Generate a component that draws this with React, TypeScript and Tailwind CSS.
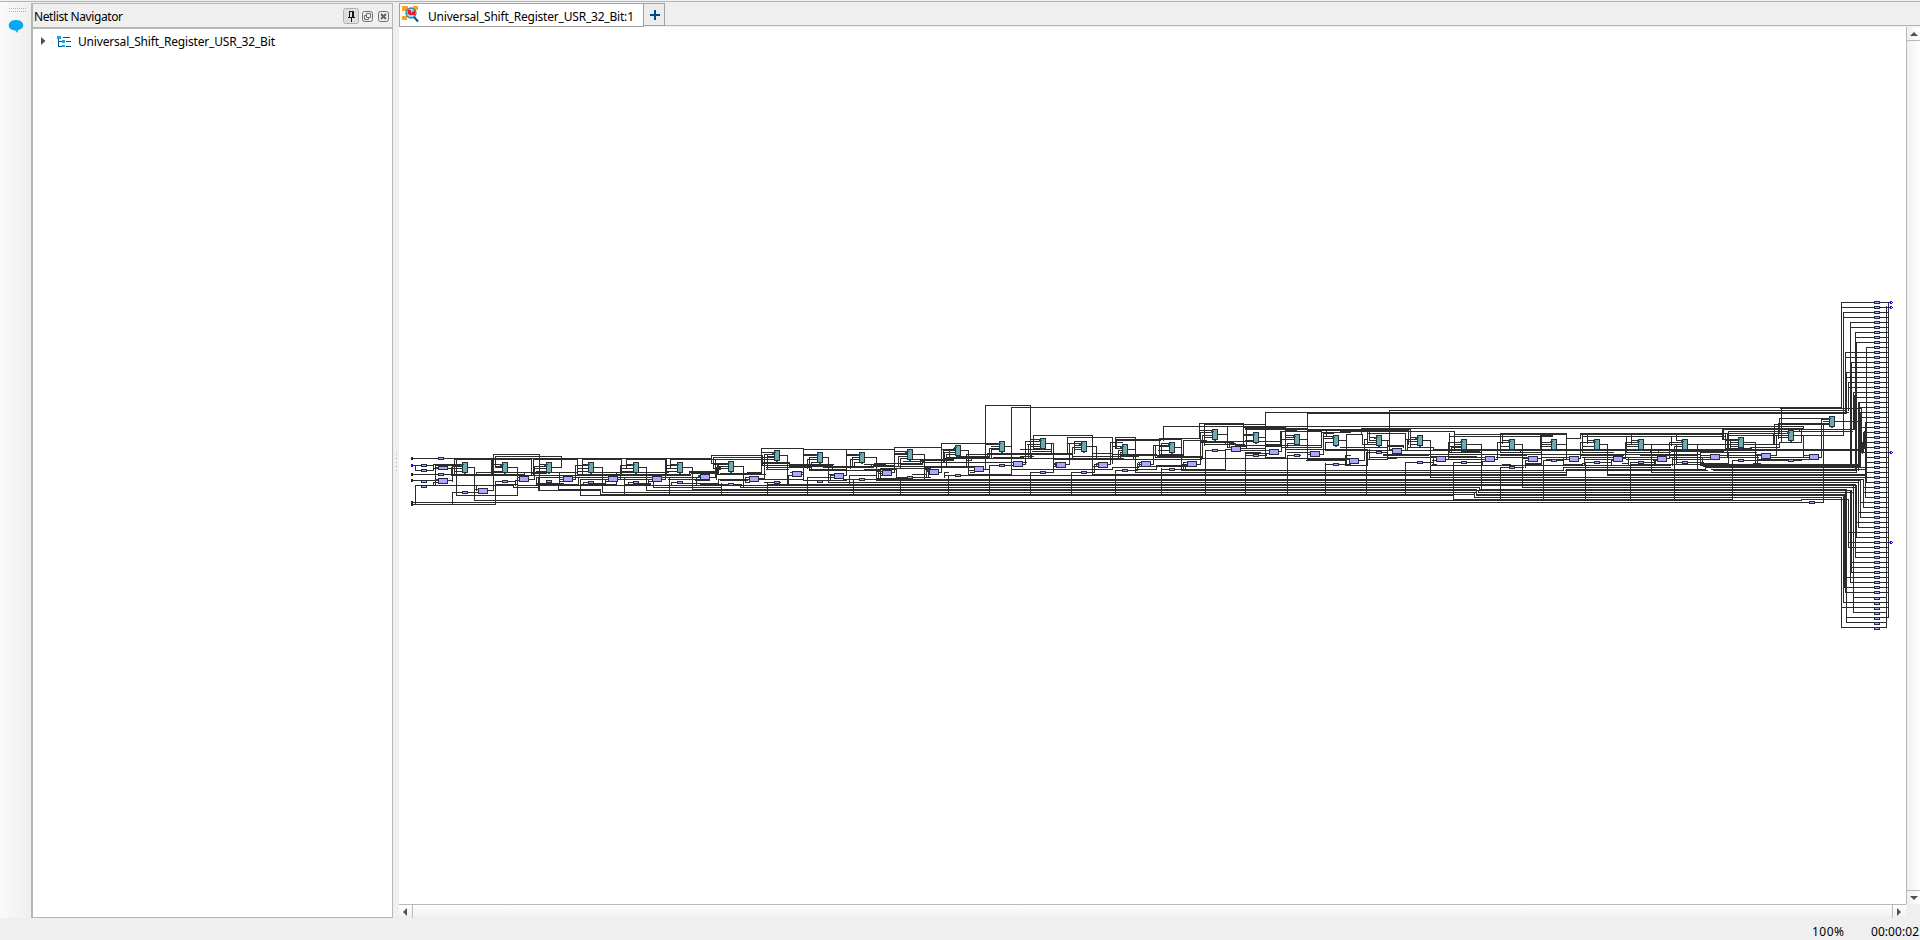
import React from "react";

type Region = {
  x: number;
  y: number;
  wires: string;
  muxes?: number[][];
  blocks?: number[][];
  buffers?: number[][];
};

// Schematic coordinates are in thirds of a pixel, relative to each region's origin.
// H y,x1,x2 is a horizontal net, V x,y1,y2 a vertical one.
const regions: Region[] = [
  {
    x: 390, y: 440,
    wires: `H55,68,965 H58,194,303 H58,310,425 H58,431,563 H58,578,695 H58,709,828 H58,841,980 H76,68,130 V76,76,91 H91,76,110 H91,110,130 V130,73,91 H73,130,215 V136,73,136 H76,136,215
 H84,130,187 H103,68,260 H121,68,145 H127,130,145 V130,127,136 H136,76,370 V76,136,193 H187,68,990 H193,68,316 V316,123,193 H123,316,377 V187,157,193 H157,187,234 H157,234,265
 V187,73,123 H121,172,187 V184,82,106 V194,58,103 V200,55,166 H73,200,217 H79,187,217 H85,190,217 H94,194,217 H106,184,310 H103,194,310 H82,232,254 V254,82,181 H181,254,990 H166,200,383
 V260,97,106 H97,260,410 V260,136,151 H148,254,265 H152,294,310 V310,43,152 H43,310,449 V449,43,149 H49,316,515 V515,49,82 V316,49,82 V303,58,106 V306,55,103
 H73,310,337 H79,316,337 H82,316,337 H94,310,337 H82,353,383 V383,82,166 H103,303,404 H106,303,428 V404,97,106 H133,316,383 V370,133,142 H142,370,445 V376,121,136 H121,376,390 H117,416,434 V434,79,117 H79,434,470 H73,449,470 H85,434,470 H94,440,470
 V425,58,106 V431,55,106 V449,58,97 H97,410,515 H100,428,470 H106,428,560 H82,485,515 V440,112,136 H112,440,565 H118,410,434 V445,112,151 H151,445,632 H130,440,520 V509,97,133 H97,509,563 H118,509,521 H123,509,521 H136,383,570 H133,440,565
 H117,548,557 V557,76,117 H76,557,596 V563,55,106 V578,55,106 H73,578,596 H85,563,596 H94,563,596 H106,563,703 H103,563,703 V566,112,136 V572,118,166 H112,566,680 H118,572,655 H166,572,990 H82,611,638 V638,82,157 H157,638,990 H127,580,610 V580,127,136 H130,610,645 V632,148,163 H148,506,632 V506,136,148 H163,632,990
 H136,566,780 H133,572,680 V645,118,136 H118,645,656 H124,645,656 H117,683,692 V692,76,117 H76,692,730 H73,709,730 H85,695,730 H94,695,730 V695,55,106 V709,55,82 H97,611,835 H103,703,900 H106,703,900 H82,746,770 V770,82,151 H151,770,990 H112,680,910 H118,680,790 V704,112,163 V680,97,136 H127,714,745 V714,127,136 H130,745,780 V774,118,136 H118,774,788 H124,774,788 H136,700,920 H133,704,780
 H117,815,825 V825,58,117 H76,825,862 V828,58,106 V841,55,82 H73,841,862 H85,828,862 H94,828,862 H106,828,900 H103,828,900 H82,878,908 V908,82,148 H148,908,990 H142,790,990 V790,112,142 V838,112,163 H127,845,878 V845,127,136 H130,878,915 H112,838,932 H118,835,930 V899,94,106 H94,899,980 H97,899,985 H100,905,980 V920,112,136 H112,910,932 H121,915,932 H130,920,985 V985,118,130 H118,985,990 H136,920,990 H113,958,977 V977,70,113 V965,46,70 H46,965,990 H52,970,990 V970,52,70 H70,970,990 H82,980,990 V980,82,100 H88,980,990 V986,70,103 H103,980,990`,
    muxes: [[225, 82], [345, 82], [477, 82], [603, 82], [738, 82], [870, 82]],
    blocks: [[159, 84, 28, 10], [159, 123], [279, 153], [402, 117], [534, 117], [669, 117], [801, 117], [945, 114]],
    buffers: [[153, 55], [102, 76], [102, 91], [153, 103], [102, 125], [102, 139], [225, 157], [345, 125], [477, 125], [603, 127], [738, 127], [870, 127]],
  },
  {
    x: 700, y: 395,
    wires: `H190,0,34 H193,0,40 V34,181,205 H181,34,184 V184,160,181 H160,184,310 H187,40,200 V40,187,220 H193,46,200 V46,193,235 H205,34,85 H208,40,85 H214,52,85 V52,208,238 H220,40,85 H220,58,85 H214,101,130 V130,214,277 H238,52,195 H235,60,184 H229,0,52 H235,0,52 V49,220,254 H248,28,45 H254,55,150 V55,254,268 H257,60,142 H265,0,55 H268,0,125 H271,0,142 V64,265,298 H277,120,990 V122,268,277 H248,136,148 V136,248,262 H262,136,148 H251,175,193 V193,178,251 H178,193,222 H172,184,222 H184,202,222 H187,202,222 H193,202,222 V184,172,232 V187,181,211 V202,178,223 H232,142,184 H181,238,262 V262,181,268 H223,200,265 H202,184,268 H205,184,268 V268,202,217 H217,200,330 H211,187,345 H214,268,370 H208,268,400 H253,175,310 H262,193,240 V202,262,298 H268,202,990 H271,142,990 H240,265,276 V265,240,268 H232,270,310 H237,305,310 V310,160,253
 H163,310,583 H178,310,352 H181,310,352 H187,328,352 V328,187,226 H193,322,352 V322,193,220 H202,333,352 V333,202,223 H187,367,385 V385,187,262 H208,345,397 H211,345,397 V397,208,226 H223,328,440 H226,330,445 H214,367,520 H217,370,520 H262,385,990 H247,322,405 V322,247,298 H237,385,403 V391,237,256 H242,391,403 H248,397,403 H256,310,440 H253,431,478 H242,431,439 V439,163,242 H178,440,478 H181,440,478 H187,457,478 V457,187,214 H193,451,478 V451,193,220 H202,463,478 V463,202,217 H187,494,530 V530,187,253 H241,448,530 V448,241,265 V460,253,298 H253,494,545 H208,494,555 H211,520,580 H214,515,600 V515,208,217 V523,205,214 H205,523,665 H223,494,590 H226,440,540 V540,220,256 H220,540,600 H229,530,548 H234,535,548 V535,229,256 H241,540,548 H256,530,990 H253,545,990 H233,574,583 V583,157,233 H157,583,725 H169,583,622 H175,583,622 H178,583,622 H184,595,622 V595,184,214 H190,601,622 V601,190,220 H178,637,674 V674,178,253 H193,637,760 H196,660,760 H199,610,670 V660,193,208 H208,600,667 V667,196,208 H214,600,690 H220,600,690 V590,223,247 H250,530,620 H247,590,690 V601,247,298 H202,667,980 H238,637,675 H223,674,715 V678,223,247 H229,678,690 H236,685,690 V685,223,247 H232,716,724 V724,145,232 H145,724,900 H163,724,765 H166,730,765 V730,166,202 H172,733,765 V733,172,202 H178,740,765 V740,178,214 V747,166,190 H166,782,805 V805,166,238 H184,770,815 H187,740,865 H190,730,865 V815,184,196 H196,803,815 H214,674,825 H217,674,825 V745,241,298 H241,733,815 V733,232,247 H232,733,745 H241,815,990 H238,805,935 H226,805,823 H232,810,823 H223,851,865 V856,31,223 H31,856,990 V934,37,240 H37,934,990 H145,856,900 H148,856,900 H154,875,900 H160,868,900 V868,160,190 H163,875,900 V875,163,190 H178,800,990 H175,862,980 V862,175,187 V799,178,211 H184,805,865 H154,914,935 H190,868,990 H187,880,970 H211,868,940 V868,211,298 V976,139,208 H139,976,990 H208,966,976 V985,148,190 H148,985,990 H223,935,990 H178,914,990
 H283,0,990 H286,0,990 H292,0,990 H298,0,990 H301,0,990 H316,0,990 H322,0,990`,
    muxes: [[93, 214], [231, 181], [360, 187], [486, 187], [630, 178], [774, 166], [906, 154]],
    blocks: [[15, 248], [162, 252], [291, 237], [417, 243], [561, 234], [702, 231], [837, 222], [954, 207]],
    buffers: [[93, 268], [231, 262], [360, 260], [486, 253], [630, 247], [774, 241], [906, 211]],
  },
  {
    x: 1020, y: 395,
    wires: `H31,0,31 V31,31,190 H37,0,990 H139,15,60 V16,139,208 H208,8,16 H133,31,60 H148,22,60 V25,148,178 H154,31,60 H160,40,60 V40,121,163 H121,40,217 V217,121,240 H163,0,95 V95,145,178 H145,76,100 V100,145,233 H169,38,95 H175,0,154 H178,0,154 H184,0,40 V34,178,190 H190,0,310 H193,100,545 H127,142,277 V142,127,175 H145,142,183 H151,163,183 V163,151,175 H157,157,183 V157,157,193 H163,163,183 H139,163,200 V163,139,151 H154,200,230 V230,154,193 H208,136,148 V148,148,208 H208,100,110 V106,202,215 H202,106,110 H214,100,110 H232,31,60 V31,232,298 H232,76,100 H223,0,278 V278,217,223 H217,278,355 H240,0,990 H238,217,990 H232,154,183 V154,232,298 H232,200,223 V223,208,232 H208,223,235 H205,229,235 V229,205,215 H214,217,235 V277,127,205 H209,262,271 V271,142,209 H142,271,308 H175,217,277 H178,277,410 H184,160,355 V286,127,160 H127,286,347 V347,127,233 H133,286,425 H136,290,420 V290,136,160 H154,277,307 H160,290,307 H166,295,307 V295,166,190 H172,300,307 V300,172,190 H163,322,347 H181,300,430 V340,178,193 H226,286,308 V286,226,298 H226,322,352 V352,205,226 H208,355,363 H202,355,363 V358,202,215 H214,355,500 H233,347,990 H211,410,498 V410,211,223 H223,347,410 H207,391,400 V400,151,207 H151,400,450 V418,130,181 H130,418,540 H133,418,485 V430,94,135 H94,430,990 H154,418,450 H145,424,450 V424,145,178 H166,415,450 V406,151,187 H187,406,545 H184,412,545 H181,412,490 H157,464,485 V485,133,226 H178,418,490 V490,136,181 H136,490,560 H226,485,990 H223,425,615 V424,220,298 H207,484,502 H202,490,502 V490,202,220 V496,208,223 H208,530,542 V542,112,208 H112,542,577 V538,85,130 H85,538,670 V553,88,150 H88,553,736 H106,538,577 H121,547,577 V547,121,187 H127,553,577 H118,594,622 V622,94,157 V556,166,298 H166,556,617 V617,163,223 H163,617,633 H157,622,633 H142,545,640 V615,139,148 H148,553,672 H145,628,645 V628,145,154 H139,545,620 H139,620,780 H151,645,780 V670,85,154 H103,676,795 V680,103,160 H121,670,700 H118,670,700 H136,676,700 H154,655,680 H160,662,735 H127,715,736 V736,52,187 H52,736,990 H166,662,748 H187,736,797 V797,154,187 H175,676,748 V676,172,298 H172,676,720 H181,676,700 H181,716,740 V740,175,181 H169,776,785 V785,109,169 H148,736,780 V780,109,154 H109,780,905 H151,780,905 H157,785,905 H163,797,990 H154,736,785 H97,670,796 H100,676,862 V796,97,163 H103,800,990 H106,796,830 V825,100,109 H121,796,823 H127,800,823 H133,785,823 H145,802,823 V802,145,154 H133,838,862 V862,54,193 H55,862,990 H181,802,840 V802,181,298 H172,802,872 H178,862,872 H193,862,980 H190,545,990 H196,860,980 H177,898,911 V911,112,177 V904,112,157 H112,904,990 H115,911,940 H124,911,940 H130,911,940 H142,916,940 V916,142,163 V920,103,124 H106,862,990 H136,956,980 V980,118,193 H118,980,990 H166,916,980 H208,916,990 V916,205,298 V977,181,211 H181,977,990 H163,977,990 H193,977,990 H211,977,990
 H253,0,990 H256,0,990 H262,0,990 H268,0,990 H271,0,990 H277,0,990 H283,0,990 H286,0,990 H292,0,990 H298,0,990 H301,0,990 H316,0,990 H322,0,990`,
    muxes: [[69, 145], [192, 154], [315, 163], [456, 157], [585, 118], [708, 127], [831, 133], [948, 136]],
    blocks: [[-6, 207], [123, 210], [249, 210], [378, 207], [516, 207], [648, 162], [762, 171], [885, 177], [1002, 198]],
    buffers: [[69, 232], [192, 232], [315, 226], [456, 223], [585, 166], [708, 181], [831, 181], [948, 208]],
  },
  {
    x: 1340, y: 395,
    wires: `H37,0,990 H46,149,990 V149,46,166 H52,0,990 H55,0,990 H94,0,990 H100,64,990 H103,0,210 V64,100,118 V211,103,154 H109,0,343 V343,109,163 H136,0,19 V19,118,211 H118,19,67 V67,118,148 H148,67,108 H106,0,205 V82,109,148 V88,103,136 H136,88,108 H142,82,108 H127,88,108 H136,125,149 V205,109,148 H115,82,197 V197,115,163 V142,136,193 H157,0,142 H154,142,190 V190,151,157 H151,142,190 H163,0,82 H166,0,325 V82,163,193 H193,82,142 H187,88,168 H190,142,168 V88,163,190 H172,79,142 V79,172,298 V73,133,196 H133,73,82 H196,55,73 H211,15,83 V83,190,211 H193,0,28 V16,193,211 H208,0,28 V203,133,166 H166,184,203 H127,211,232 H133,200,232 H139,203,232 H148,211,232 H136,247,271 V271,136,247 H247,271,990 H157,205,280 V280,157,166 H163,280,420 H166,280,420 H178,130,480 H181,130,265 V265,178,181 H187,142,280 V280,187,208 H184,270,410 H202,197,232 V197,202,298 H202,247,280 H196,278,290 H208,278,290 H211,271,340 H192,316,325 V325,142,192 V328,115,172 H142,325,365 H118,343,680 H124,328,637 V637,118,124 H148,343,365 H154,328,365 H157,335,365 V335,157,172 H172,328,420 H148,380,425 V425,148,283 H169,365,419 V419,163,172 H202,340,364 V340,202,313 H202,379,425 H211,340,487 V487,208,211 H208,487,510 H187,325,437 H193,325,437 H199,425,437 V428,199,211 V472,142,192 H192,464,472 H142,472,508 V481,115,163 V487,115,145 H115,481,605 H136,487,508 H154,481,508 H163,425,540 H166,425,540 H172,481,543 V541,163,172 V481,217,313 H217,481,550 V481,157,172 H148,523,548 V548,148,277 H277,548,990 H187,470,565 H190,550,565 H178,480,615 H181,480,560 V556,196,217 H196,556,565 H163,541,680 H166,541,730 H172,541,605 V604,115,190 H191,594,604 H142,604,634 H148,604,634 H154,604,634 V601,118,166 H121,601,638 H148,650,680 V680,115,190 H115,604,680 V611,196,313 H196,611,634 H196,650,670 V670,187,211 H187,604,690 H205,556,604 H208,560,604 V604,190,208 H211,556,735 H211,487,560 H193,620,690 H187,680,690 H130,680,722 V722,115,130 H115,722,990 H118,722,990 H124,728,860 V728,118,170 V742,118,145 H136,742,765 H154,728,765 H142,722,765 V722,142,190 H191,716,722 H148,779,803 V803,148,238 H163,680,855 H166,730,860 H172,728,820 H178,615,850 H181,722,850 H187,728,822 H193,735,822 V733,187,208 H202,736,763 V736,202,313 H202,779,815 V815,196,211 H196,815,822 H205,728,736 H208,670,728 H211,736,870 V856,142,190 V860,124,170 V874,118,145 H124,860,990 H136,874,895 H142,856,895 H148,860,895 H154,860,895 H148,911,935 V935,148,233 H163,856,990 H166,856,990 H172,860,955 V955,163,172 H178,850,990 H187,848,955 H193,860,955 V865,187,211 H202,871,895 V871,202,313 H202,911,942 V942,193,211 H196,942,955 H208,870,990 H211,870,990 H205,848,866 H191,848,856 V988,142,190 H233,935,990
 H226,0,670 V670,217,226 H217,670,990 H223,680,990 H226,676,990 V679,223,240 H232,0,680 H238,0,680 H240,0,680 H238,803,990 H241,803,990 H253,0,990 H256,0,990 H262,0,990 H268,0,990 H271,0,990 H277,0,415 V418,277,286 H283,418,990 H286,0,418 H283,0,410 V415,286,292 H292,415,990 H286,418,990 H292,0,409 V409,286,298 H298,409,990 H298,0,403 V403,292,307 H307,403,990 H301,0,340 H301,409,990 H313,340,990 H316,0,990 H322,0,990`,
    muxes: [[117, 136], [240, 136], [372, 148], [516, 148], [642, 148], [771, 148], [903, 148]],
    blocks: [[42, 198], [171, 168], [303, 192], [450, 192], [579, 192], [702, 192], [834, 192], [966, 192]],
    buffers: [[117, 172], [240, 202], [372, 202], [516, 217], [642, 196], [771, 202], [903, 202]],
  },
  {
    x: 1640, y: 395,
    wires: `H37,0,605 H40,424,636 H46,0,618 H52,0,625 H55,0,620 H94,0,490 H100,0,490 V424,40,142 H69,418,570 V418,69,115 V415,88,130 H85,415,570 H88,403,570 V403,88,148 H79,584,664 H73,545,570 V545,73,187 V551,85,322 H79,551,570 H94,415,490 V490,94,103 H100,478,490 H103,247,640 H109,265,636 V265,109,160 V247,103,133 V250,103,130 H115,0,400 H118,0,250 H121,265,610 V478,100,109 H133,247,295 H136,257,295 H115,403,443 H121,409,443 V409,121,181 H127,415,443 H121,460,610 V610,0,121 H142,418,484 V484,100,142 H148,0,400 H148,400,418 V418,142,157
 V403,115,148 V94,124,150 H124,94,257 V109,118,136 H136,109,126 H142,88,126 V88,142,191 H191,80,88 H148,94,126 H154,103,126 V103,154,313 H148,143,172 V172,148,223 H163,30,665 H166,0,490 V31,163,172 H172,0,90 H169,95,250 V257,118,163 V263,118,186 V271,136,163 H148,263,295 H154,271,295 H142,271,295 H142,312,346 V346,142,217 H157,330,418 V400,115,148 H166,490,665 H160,257,335 V335,157,166 H172,180,350 H178,0,180 H181,0,170 V180,172,208 H187,0,50 H193,0,50 H196,40,50 V46,196,211 H187,90,210 H193,97,210 V97,190,211 H202,0,10 H202,110,128 V110,150,205 H202,142,190 V187,190,211 H186,240,263 H181,180,355 H187,239,355 V277,196,313 H196,277,295 H196,311,355 H181,350,363 H178,350,363 V352,178,208 H187,365,508 H181,393,409 H193,352,484 H196,352,445 H196,461,485 H193,484,508 H181,490,508 H187,537,545 V490,121,184
 H208,0,200 H211,0,90 H211,180,636 H208,180,660 V265,172,205 H205,180,265 V200,208,217 H217,200,350 H217,345,632 H214,190,660 V340,205,217 H205,340,360 H223,0,195 V195,217,223 H226,0,203 H226,220,650 H223,215,650 H223,170,190 V34,148,232 H148,8,34 H232,34,650 H238,0,676 H240,0,676 H247,0,676 H253,0,670 H256,0,660 H262,0,655 H268,0,645 H271,0,648 H277,0,650 H283,0,620 H286,0,632 H292,0,636 H298,0,615 H301,0,618 H307,0,605 H313,0,277 H313,485,622 V485,313,316 H316,0,485 H322,0,551
 V632,0,217 V634,0,210 V642,0,103 V649,0,232 V655,22,226 V658,22,211 V664,40,172 V661,52,208 V670,142,166 V673,110,160 V676,110,240 V679,0,240 V667,142,172 H112,673,700 H127,670,700 H142,667,700 H157,670,700 H172,664,700 H187,676,700 H202,676,700 H217,679,700 H232,676,700 V676,238,307 V670,253,337 H247,676,700 H262,679,700 V679,238,262 H277,670,700 H292,676,700 H307,676,700 H322,661,700 V661,256,322 H337,670,700 H352,655,700 V655,262,360 H97,664,700 H82,679,700 H67,661,700 H52,664,700 H37,655,700 H22,655,700 H7,642,700`,
    muxes: [[3, 148], [135, 148], [303, 142], [453, 121], [576, 79]],
    blocks: [[66, 192], [225, 186], [378, 183], [522, 186]],
    buffers: [[3, 202], [135, 202], [303, 196], [453, 196], [516, 322]],
  },
  {
    x: 1780, y: 290,
    wires: `V184,37,355 H37,184,330 H52,184,330 V190,67,436 H67,190,325 H82,190,325 V211,97,530 H97,211,325 H112,211,325 V226,127,540 H127,226,325 H142,226,325 V229,157,540 H157,229,325 V259,172,500 H172,259,325 V196,187,370 H187,196,325 H202,196,325 V214,217,424 H217,214,325 H232,214,325 V199,247,370 H247,199,325 H262,199,325 V205,277,360 H277,205,325 H292,205,325 V220,307,418 H307,220,325 H322,220,325 V235,337,525 H337,235,325 H352,235,325 V241,367,520 H367,241,325 V244,355,487 H382,244,325 V256,397,517 H397,256,325 H412,256,325 V250,427,485 H427,250,325 H442,250,325 V247,457,490 H457,244,325 H472,250,325 H487,244,330 H502,259,325 H517,256,325 V259,517,540 H532,229,325 V319,50,540 V325,37,540 H352,0,185 H355,0,244 H361,0,200 H367,0,205 H370,0,200`,
    buffers: Array.from({ length: 34 }, (_, i) => [291, 37 + i * 15]),
  },
  {
    x: 1780, y: 460,
    wires: `V319,0,502 V325,0,472 V184,112,502 H502,184,319 V190,106,427 V193,104,382 V196,88,397 V199,88,487 V205,118,262 V211,92,367 V214,92,337 V220,73,457 V226,78,292 V229,78,232 V235,62,202 V241,58,172 V250,58,142 V256,43,112 V259,10,67
 H7,259,325 H22,229,325 H37,259,325 H52,256,325 H67,259,325 H82,256,325 H97,250,325 H112,256,325 H127,241,325 H142,250,325 H157,235,325 H172,241,325 H187,229,325 H202,235,325 H217,205,325 H232,229,325 H247,205,330 H262,205,325 H277,226,325 H292,226,325 H307,214,325 H322,211,325 H337,214,325 H352,199,325 H367,211,325 H382,190,325 H397,196,325 H412,220,319 H427,190,325 H442,184,325 H457,220,319 H472,199,325 H487,199,319 V211,0,22 V226,0,30 V229,0,37 V235,0,16 V241,0,16 V256,0,43
 H13,0,235 H16,0,241 H22,0,230 H28,0,256 H37,0,230 H43,0,256 H46,0,256 H52,0,256 H58,0,250 H61,0,241 H67,0,235 H73,0,220 H76,0,229 H82,0,226 H88,0,199 H91,0,214 H97,0,211 H103,0,196 H106,0,190 H112,0,184 H118,64,205 V64,118,122 H121,0,64 V130,0,127 H127,0,130`,
    buffers: [
      ...Array.from({ length: 27 }, (_, i) => [291, 7 + i * 15]),
      ...Array.from({ length: 7 }, (_, i) => [291, 415 + i * 15]),
      [96, 127],
    ],
  },
];

const snap = (v: number) => Math.floor(v / 3);

function wirePath(r: Region) {
  return r.wires
    .trim()
    .split(/\s+/)
    .map((w) => {
      const [a, b, c] = w.slice(1).split(",").map(Number);
      return w[0] === "H"
        ? `M${r.x + snap(b)} ${r.y + snap(a) + 0.5}H${r.x + snap(c) + 1}`
        : `M${r.x + snap(a) + 0.5} ${r.y + snap(b)}V${r.y + snap(c) + 1}`;
    })
    .join("");
}

const ports = [
  [411, 458], [411, 465], [411, 474], [411, 480], [411, 502], [411, 504],
];
const outPorts = [[1890, 302], [1890, 307], [1890, 452], [1890, 542]];

function Schematic() {
  return (
    <svg className="block h-full w-full" viewBox="399 26 1507 878" shapeRendering="crispEdges">
      {regions.map((r, i) => (
        <path key={i} d={wirePath(r)} stroke="#2b2b2b" strokeWidth="1" fill="none" />
      ))}
      {regions.map((r, i) => (
        <g key={i}>
          {(r.buffers ?? []).map(([x, y], k) => {
            const px = r.x + snap(x) - 3;
            const py = r.y + snap(y) - 1;
            return (
              <g key={k}>
                <rect x={px} y={py} width="6" height="3" fill="#1f2d3d" />
                <rect x={px + 1} y={py + 1} width="4" height="1" fill="#b0a6ff" />
              </g>
            );
          })}
          {(r.blocks ?? []).map(([x, y, w = 28, h = 16], k) => {
            const pw = Math.round(w / 3) + 1;
            const ph = h < 16 ? 4 : 6;
            const px = r.x + snap(x) - 5;
            const py = r.y + snap(y) - (h < 16 ? 2 : 3);
            return (
              <g key={k}>
                <rect x={px - 2} y={py + 1} width="2" height="1" fill="#124a70" />
                <rect x={px + 0.5} y={py + 0.5} width={pw - 1} height={ph - 1} fill="#b0a6ff" stroke="#1f2d3d" />
              </g>
            );
          })}
          {(r.muxes ?? []).map(([x, y], k) => {
            const px = r.x + snap(x) - 3;
            const py = r.y + snap(y) - 5;
            return (
              <g key={k}>
                <path d={`M${px - 1} ${py + 2.5}h2M${px - 2} ${py + 3.5}h2M${px + 2} ${py + 11.5}h2`} stroke="#075389" />
                <rect x={px + 0.5} y={py + 0.5} width="5" height="10" fill="#72aaab" stroke="#203234" />
                <path d={`M${px} ${py + 2.5}h2`} stroke="#075389" />
              </g>
            );
          })}
        </g>
      ))}
      {ports.map(([x, y], k) => (
        <path key={k} d={`M${x} ${y - 0.5}h2M${x + 0.5} ${y - 1}v3M${x} ${y + 1.5}h2`} stroke="#0909e8" fill="none" />
      ))}
      {outPorts.map(([x, y], k) => (
        <path key={k} d={`M${x} ${y + 0.5}h1M${x + 0.5} ${y - 1}v3M${x + 1} ${y - 0.5}h1M${x + 1} ${y + 1.5}h1M${x + 2} ${y + 0.5}h1`} stroke="#0909e8" fill="none" />
      ))}
    </svg>
  );
}

function Arrow({ d, className }: { d: string; className: string }) {
  return (
    <svg className={className} viewBox="0 0 8 8">
      <path d={d} fill="#505050" />
    </svg>
  );
}

function LeftToolbar() {
  return (
    <aside className="flex w-[31px] shrink-0 flex-col bg-linear-to-r from-[#fafafa] to-[#efefef] pt-1.5">
      <svg className="ml-2 h-2 w-[18px]" viewBox="0 0 18 8" shapeRendering="crispEdges">
        <path d="M1 .5h17M1 3.5h17" stroke="#b5b5b5" strokeDasharray="1 1" />
      </svg>
      <svg className="ml-2 mt-[3px] h-[15px] w-4" viewBox="0 0 16 15">
        <path d="M8 1C3.800 1 .7 3.200.7 6.300c0 3 2.700 5 6.600 5.200.7.800 1.300 1.700 2.500 2.400v-2.600c3.200-.6 5.500-2.500 5.500-5C15.300 3.200 12.200 1 8 1Z" fill="#03a9f4" />
      </svg>
    </aside>
  );
}

function Navigator() {
  return (
    <section className="mt-[1px] flex w-[362px] shrink-0 flex-col border border-l-2 border-[#b6b6b6] bg-white">
      <header className="flex h-[25px] shrink-0 items-center border-b-2 border-[#b6b6b6] bg-[#efefef] pl-[1px] pr-[3px]">
        <h1 className="flex-1 whitespace-nowrap pt-[3px] text-[12px] leading-4">
          <svg className="block h-4 w-24 overflow-visible"><text x="0" y="12" textLength="89">Netlist Navigator</text></svg>
        </h1>
        <div className="flex items-center gap-[3px]">
          <svg className="h-4 w-4" viewBox="0 0 16 16">
            <rect x=".5" y=".5" width="15" height="15" rx="2" fill="#dedede" stroke="#b0b0b0" />
            <path d="M6.500 3.500h4v6h-4zM9.500 4v5M4.500 9.500h7M8.500 10v3.500" fill="none" stroke="#151515" shapeRendering="crispEdges" />
          </svg>
          <svg className="mt-[1px] h-[11px] w-[11px]" viewBox="0 0 11 11">
            <rect x=".5" y=".5" width="10" height="10" rx="2" fill="none" stroke="#707070" />
            <path d="M4.500 2.500h4v4h-4zM4 4.500H2.500v4h4V7" fill="none" stroke="#707070" />
          </svg>
          <svg className="mt-[1px] ml-[2px] h-[11px] w-[11px]" viewBox="0 0 11 11">
            <rect x=".5" y=".5" width="10" height="10" rx="2" fill="none" stroke="#707070" />
            <path d="m3 3 5 5M8 3 3 8" stroke="#606060" strokeWidth="1.900" />
          </svg>
        </div>
      </header>
      <div className="flex h-[26px] items-center pl-[7px]">
        <Arrow d="M1 0 5.500 4 1 8Z" className="mb-0.5 h-2 w-2" />
        <svg className="ml-[9px] mb-0.5 h-[11px] w-[14px]" viewBox="0 0 14 11" shapeRendering="crispEdges">
          <path d="M1.500 2v8.500H5M2 5.500h3M6 1.500h7M9 5.500h5M9 10.500h5" fill="none" stroke="#00508b" />
          <path d="M0 0h4v3H0zM5 4h3v3H5zM5 9h3v2H5z" fill="#16a6dd" />
        </svg>
        <svg className="ml-[7px] h-4 w-52 overflow-visible text-[12px]"><text x="0" y="12" textLength="197">Universal_Shift_Register_USR_32_Bit</text></svg>
      </div>
    </section>
  );
}

function TabBar() {
  return (
    <div className="flex h-6 shrink-0">
      <div className="flex w-[245px] border border-[#a2a2a2] bg-white">
        <svg className="ml-[2px] mt-[2px] h-[17px] w-[17px]" viewBox="0 0 17 17">
          <path d="M0 0h6v5H0zM11 0h5v4h-5zM0 10h5v4H0z" fill="#f8a51b" />
          <circle cx="9" cy="7" r="5" fill="#8fd9ed" stroke="#3185a8" strokeWidth="1.300" />
          <path d="M6 4h3v4H5.500zM9 7l4-3v5H7V7z" fill="#ed1c24" />
          <path d="m12 11 4 4.500" stroke="#075288" strokeWidth="2" />
        </svg>
        <svg className="ml-[9px] mt-1 h-4 w-52 overflow-visible text-[12px]"><text x="0" y="13" textLength="206">Universal_Shift_Register_USR_32_Bit:1</text></svg>
      </div>
      <div className="flex h-[23px] w-[21px] items-center justify-center border border-l-0 border-[#a2a2a2] bg-[#ececec] pl-0.5">
        <svg className="h-[10px] w-[10px]" viewBox="0 0 10 10" shapeRendering="crispEdges">
          <path d="M5 0v10M0 5h10" stroke="#004b87" strokeWidth="2" />
        </svg>
      </div>
      <div className="mb-[1px] flex-1 border-b border-[#b6b6b6]" />
    </div>
  );
}

export default function App() {
  return (
    <main className="flex h-[940px] w-[1920px] flex-col overflow-hidden bg-[#efefef] font-['Noto_Sans',sans-serif] text-[12px] text-black">
      <div className="mt-[1px] h-[1px] shrink-0 bg-[#b6b6b6]" />
      <div className="flex h-[916px] shrink-0">
        <LeftToolbar />
        <Navigator />
        <div className="flex w-1.5 shrink-0 items-center justify-center">
          <svg className="mt-1 h-[17px] w-[2px]" viewBox="0 0 2 17" shapeRendering="crispEdges">
            <path d="M1.500 0v17" stroke="#b6b6b6" strokeDasharray="1 3" />
          </svg>
        </div>
        <section className="mt-[1px] flex min-w-0 flex-1 flex-col">
          <TabBar />
          <div className="flex h-[877px] shrink-0 bg-white">
            <div className="h-[877px] w-[1507px]">
              <div className="-mt-[1px] h-[878px] w-[1507px]"><Schematic /></div>
            </div>
            <div className="flex w-[14px] flex-col border-l border-[#b8b8b8] bg-linear-to-r from-[#f0f0f0] to-white">
              <div className="flex h-[14px] items-center justify-center border-b border-[#b8b8b8]"><Arrow d="M0 6 4 2 8 6Z" className="h-2 w-2" /></div>
              <div className="flex-1" />
              <div className="flex h-[14px] items-center justify-center border-t border-[#b8b8b8]"><Arrow d="M0 2 4 6 8 2Z" className="h-2 w-2" /></div>
            </div>
          </div>
          <div className="mr-[14px] flex h-[14px] shrink-0 border-t border-[#b8b8b8] bg-linear-to-b from-white to-[#efefef]">
            <div className="flex w-[14px] items-center justify-center border-r border-[#b8b8b8] pr-px"><Arrow d="M6 0 2 4 6 8Z" className="h-2 w-2" /></div>
            <div className="flex-1" />
            <div className="flex w-[14px] items-center justify-center border-l border-[#b8b8b8] pr-px"><Arrow d="M2 0 6 4 2 8Z" className="h-2 w-2" /></div>
          </div>
        </section>
      </div>
      <footer className="flex h-[22px] items-center justify-end pt-[6px]">
        <svg className="h-4 w-8 overflow-visible"><text x="0" y="12" textLength="32">100%</text></svg>
        <svg className="ml-[27px] mr-[1px] h-4 w-12 overflow-visible"><text x="0" y="12" textLength="48">00:00:02</text></svg>
      </footer>
    </main>
  );
}
